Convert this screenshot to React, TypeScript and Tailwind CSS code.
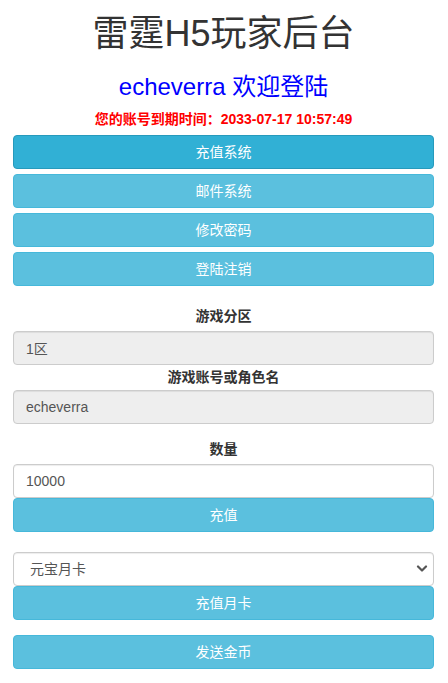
import React from "react";

const btn =
  "block w-full h-[34px] rounded-[4px] border border-[#46b8da] bg-[#5bc0de] text-white text-[14px] leading-[20px] text-center";
const input =
  "block w-full h-[34px] rounded-[4px] border border-[#ccc] px-3 text-[14px] text-[#555] shadow-[inset_0_1px_1px_rgba(0,0,0,0.075)] outline-none";
const label = "block text-center font-bold text-[14px] leading-[20px] text-[#333]";

export default function App() {
  return (
    <div
      className="min-h-[683px] bg-white pl-[13px] pr-[14px] text-[#333]"
      style={{ fontFamily: '"Liberation Sans", "Noto Sans CJK SC", sans-serif' }}
    >
      <h1 className="pt-[14px] text-center text-[36px] leading-[40px] font-normal text-[#333]">
        雷霆H5玩家后台
      </h1>
      <h3 className="mt-[20px] text-center text-[24px] leading-[26px] text-[#0000ff]">
        echeverra 欢迎登陆
      </h3>
      <div className="mt-[9px] text-center text-[14px] leading-[20px] font-bold text-[#ff0000]">
        您的账号到期时间：2033-07-17 10:57:49
      </div>

      <div className="mt-[6px] flex flex-col gap-[5px]">
        <button className="block w-full h-[34px] rounded-[4px] border border-[#269abc] bg-[#31b0d5] text-white text-[14px] leading-[20px] text-center">
          充值系统
        </button>
        <button className={btn}>邮件系统</button>
        <button className={btn}>修改密码</button>
        <button className={btn}>登陆注销</button>
      </div>

      <label className={`${label} mt-[20px] mb-[5px]`}>游戏分区</label>
      <input className={`${input} bg-[#eee]`} readOnly value="1区" />
      <label className={`${label} mt-[2px] mb-[3px]`}>游戏账号或角色名</label>
      <input className={`${input} bg-[#eee]`} readOnly value="echeverra" />

      <label className={`${label} mt-[15px] mb-[5px]`}>数量</label>
      <input className={`${input} bg-white`} readOnly value="10000" />
      <button className={btn}>充值</button>

      <div className="relative mt-[20px]">
        <select className={`${input} appearance-none bg-white pl-[16px]`} defaultValue="1">
          <option value="1">元宝月卡</option>
        </select>
        <svg
          className="pointer-events-none absolute right-[6px] top-[13px]"
          width="12"
          height="8"
          viewBox="0 0 12 8"
        >
          <path d="M2 1.5 L6 5.5 L10 1.5" fill="none" stroke="#555" strokeWidth="2.2" strokeLinecap="round" strokeLinejoin="round" />
        </svg>
      </div>
      <button className={btn}>充值月卡</button>

      <button className={`${btn} mt-[15px]`}>发送金币</button>
    </div>
  );
}
